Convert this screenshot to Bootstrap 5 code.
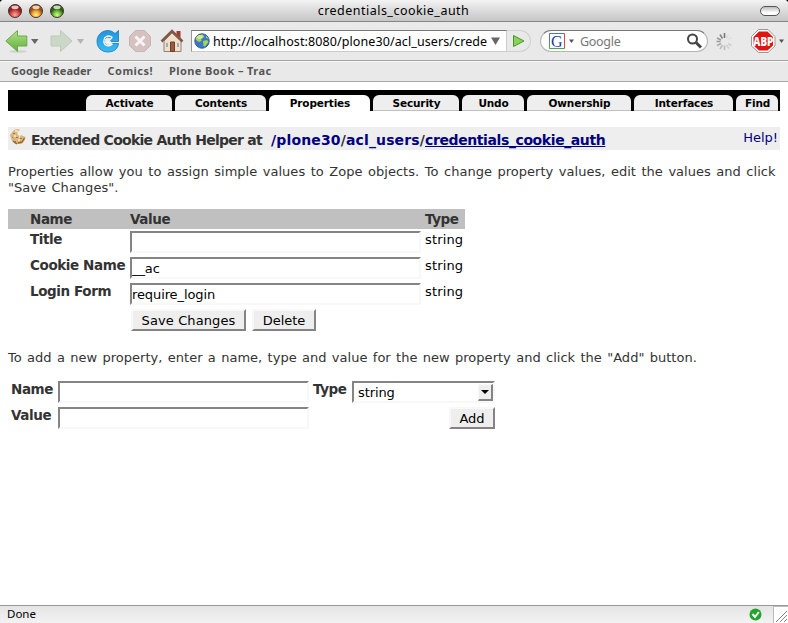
<!DOCTYPE html>
<html lang="en">
<head>
<meta charset="utf-8">
<meta name="viewport" content="width=device-width, initial-scale=1">
<title>credentials_cookie_auth</title>
<link href="https://cdn.jsdelivr.net/npm/bootstrap@5.3.0/dist/css/bootstrap.min.css" rel="stylesheet">
<style>
  html { background: #000; }
  body { height: 623px; overflow: hidden; background: #fff; color: #333; border-radius: 4px 4px 0 0;
    font: 13px/16px "DejaVu Sans", Verdana, sans-serif; }
  svg { display: block; flex: none; }
  .chrome { font-family: "Noto Sans", "Lucida Grande", sans-serif; color: #000; }
  .titlebar { height: 22px; background: linear-gradient(#f4f4f4, #e2e2e2 35%, #c6c6c6); border-bottom: 1px solid #858585; }
  .window-title { font-size: 12.5px; letter-spacing: .48px; padding-right: 1px; }
  .lights { left: 7px; top: 3px; }
  .pill { right: 8px; top: 6px; width: 20px; height: 10px; border: 1.5px solid #555; border-radius: 5px; background: linear-gradient(#bbb, #fff 70%); }
  .toolbar { height: 39px; background: #e9e9e9; border-bottom: 1px solid #a3a3a3; padding-left: 5px; }
  .urlbox { width: 316px; height: 22px; margin-left: 7px; background: #fff; border: 1px solid #999; border-top-color: #777; border-right-color: #ccc; border-bottom-color: #ccc; padding-left: 2px; font-size: 12.5px; }
  .urltext { width: 275px; margin-left: 3px; letter-spacing: .1px; padding-top: 1px; }
  .go { width: 24px; height: 22px; border: 1px solid #d0d0d0; border-left: 0; border-radius: 0 11px 11px 0; padding-left: 5px; }
  .search { width: 168px; height: 22px; margin-left: 9px; background: #fff; border: 1px solid #b5b5b5; border-top-color: #777; border-radius: 11px; padding-left: 8px; font-size: 12.5px; color: #777; }
  .search-hint { margin-left: 1px; letter-spacing: -.3px; padding-top: 1px; }
  .bookmarks { height: 21px; background: #e9e9e9; border-top: 1px solid #f7f7f7; border-bottom: 1px solid #a8a8a8; padding: 0 0 2px 11px; gap: 16px; font-size: 11px; font-weight: 700; color: #555; }
  .bm-reader { letter-spacing: .03px; } .bm-comics { letter-spacing: .45px; } .bm-plone { letter-spacing: .42px; }
  .statusbar { height: 18px; background: linear-gradient(#e4e4e4, #f3f3f3); border-top: 1px solid #999; font-size: 11.5px; padding-left: 7px; }
  .statusbar span { padding-bottom: 1px; }
  .grip { width: 15px; height: 17px; background: #fff; border-left: 1px solid #bbb; border-top: 1px solid #bbb; margin-left: 11px; }

  .page { padding: 8px 8px 0; }
  .tabbar { height: 21px; background: #000; padding: 5px 2px 0 78px; gap: 3px; }
  .tab { height: 16px; background: #eee; border-bottom: 1px solid #c0c0c0; border-radius: 6px 6px 0 0; color: #000; font-size: 10.5px; font-weight: 700; line-height: 16px; letter-spacing: -.15px; padding-left: 1px; text-align: center; text-decoration: none; flex: none; white-space: nowrap; }
  .tab.current { background: #fff; border-color: #fff; }
  .w-activate { width: 86px; } .w-contents { width: 91px; } .w-properties { width: 101px; } .w-security { width: 86px; }
  .w-undo { width: 62px; } .w-ownership { width: 104px; } .w-interfaces { width: 99px; } .w-find { width: 42px; }
  .heading { height: 23px; background: #eee; margin-top: 16px; padding: 2px 2px 0; }
  .heading h1 { font-size: 14px; font-weight: 700; line-height: 22px; margin: 0 0 0 5px; letter-spacing: .14px; white-space: nowrap; }
  .heading h1 span { letter-spacing: -.73px; margin-right: 9px; }
  .heading a.crumb, a.helplink { color: #000080; text-decoration: none; }
  .heading a.here { text-decoration: underline; letter-spacing: -.4px; }
  a.helplink { padding-top: 1px; }
  .intro { margin: 14px 0 0; letter-spacing: .02px; word-spacing: 1.38px; white-space: nowrap; }
  .add-note { margin-top: 19px; word-spacing: 1.17px; }
  .props { display: grid; grid-template-columns: 22px 100px 295px 40px; width: 457px; margin-top: 13px; }
  .props .head { background: #c0c0c0; height: 20px; line-height: 20px; margin-bottom: 2px; }
  .label { font-size: 13.5px; font-weight: 700; letter-spacing: -.4px; white-space: nowrap; }
  .cell { height: 26px; color: #000; }
  .kind { padding-top: 1px; letter-spacing: .15px; }
  .field { width: 291px; height: 22px; border: 2px solid; border-color: #848484 #f8f8f8 #f8f8f8 #848484; background: #fff; color: #000; line-height: 20px; padding: 0; outline: 0; font: inherit; letter-spacing: -.1px; display: block; }
  .narrow { width: 251px; }
  .push { height: 22px; background: #eee; border: 2px solid; border-color: #f8f8f8 #848484 #848484 #f8f8f8; color: #000; font: inherit; line-height: 17px; padding: 0; white-space: nowrap; }
  .w-save { width: 115px; letter-spacing: .1px; } .w-delete { width: 64px; } .w-add { width: 46px; }
  .actions { padding-left: 123px; gap: 6px; }
  .add { display: grid; grid-template-columns: 50px 255px 39px 143px; grid-auto-rows: 26px; width: 487px; margin-top: 15px; }
  .add .lead-in { padding-left: 3px; }
  .picker { width: 143px; padding-left: 4px; }
  .picker-text { padding-top: 1px; }
  .arrow { width: 15px; height: 17px; background: #eee; border: 1px solid; border-color: #f8f8f8 #848484 #848484 #f8f8f8; border-right-width: 2px; border-bottom-width: 2px; }
</style>
</head>
<body class="d-flex flex-column">
<header class="chrome flex-shrink-0">
  <div class="titlebar position-relative d-flex align-items-center justify-content-center">
    <svg class="lights position-absolute" width="60" height="17" viewBox="0 0 60 17">
      <defs>
        <radialGradient id="r" cy=".8"><stop offset="0" stop-color="#ffaaa0"/><stop offset=".6" stop-color="#d94f4a"/><stop offset="1" stop-color="#8e1f20"/></radialGradient>
        <radialGradient id="o" cy=".8"><stop offset="0" stop-color="#fff58a"/><stop offset=".6" stop-color="#eea12d"/><stop offset="1" stop-color="#9a5210"/></radialGradient>
        <radialGradient id="g" cy=".8"><stop offset="0" stop-color="#d8ff90"/><stop offset=".6" stop-color="#68b833"/><stop offset="1" stop-color="#245f12"/></radialGradient>
      </defs>
      <g stroke="#4a3530" stroke-width="1"><circle cx="8" cy="8" r="6.5" fill="url(#r)"/><circle cx="29" cy="8" r="6.5" fill="url(#o)"/><circle cx="50" cy="8" r="6.5" fill="url(#g)"/></g>
      <g fill="#fff" opacity=".75"><ellipse cx="8" cy="4.3" rx="3.6" ry="1.9"/><ellipse cx="29" cy="4.3" rx="3.6" ry="1.9"/><ellipse cx="50" cy="4.3" rx="3.6" ry="1.9"/></g>
    </svg>
    <span class="window-title">credentials_cookie_auth</span>
    <span class="pill position-absolute"></span>
  </div>

  <div class="toolbar d-flex align-items-center">
    <svg width="179" height="28" viewBox="5 27 179 28">
      <defs>
        <linearGradient id="ga" x2="0" y2="1"><stop offset="0" stop-color="#b5e388"/><stop offset="1" stop-color="#5fae3c"/></linearGradient>
        <linearGradient id="bl" x2="0" y2="1"><stop offset="0" stop-color="#2394dd"/><stop offset="1" stop-color="#35bdf4"/></linearGradient>
      </defs>
      <ellipse cx="18" cy="51.5" rx="9" ry="1.3" fill="#d2d2d2"/>
      <path d="M5.8 41 17.500 30.500V36H26.800V46H17.500V51.500Z" fill="url(#ga)" stroke="#68a94c" stroke-linejoin="round"/>
      <path d="M31 39h7.500l-3.700 5z" fill="#666"/>
      <path d="M72 41 60.500 30.500V36H51V46H60.500V51.500Z" fill="#ccd8c7" stroke="#bdc9b8" stroke-linejoin="round"/>
      <path d="M77 39h7l-3.500 5z" fill="#b3b3b3"/>
      <path d="M118.500 30.500V41.500H107.500L111 38Q107 35.500 104.500 39Q103 43 107 45.500Q111 46.500 112.500 43.500H118.500C118 49 113.500 52 108 52C101.500 52 97 47.500 97 41.500C97 35 102 30.500 108 30.500Q112 30.500 115 33.500Z" fill="url(#bl)" stroke="#1678b8" stroke-width=".8"/>
      <path d="M112.500 37.500Q108.500 34.500 105 37.500Q102.500 41.500 105.500 45Q109 47 112.500 44M112 37.500 107.500 42H111" fill="none" stroke="#fff" stroke-width="1.300"/>
      <path d="M135.500 30.500H144.500L150.500 36.500V45.500L144.500 51.500H135.500L129.500 45.500V36.500Z" fill="#d6c1c1" stroke="#c7b4b4"/>
      <path d="m135.500 36.500 9 9m0-9-9 9" stroke="#f8f4f4" stroke-width="3"/>
      <path d="M176.500 31h4v9h-4z" fill="#a43a2c"/>
      <path d="M164 41 172 33 181 41V51.500H164Z" fill="#f1dfcb" stroke="#99806b"/>
      <path d="M161.500 41.500 172 31 182.500 41.500" fill="none" stroke="#7d5a4b" stroke-width="2.600"/>
      <path d="M170.500 42h4v9.500h-4z" fill="#9a5b3d" stroke="#6b4130"/>
      <path d="M166 43h2v4h-2zM177 43h2v4h-2z" fill="#9ab0bd"/>
    </svg>
    <div class="urlbox d-flex align-items-center">
      <svg width="16" height="16" viewBox="0 0 16 16"><circle cx="8" cy="8" r="7.200" fill="#3979cd" stroke="#34558e"/><path d="M2 4Q5 1 9 1.500L10.500 4 7 5.500 7.500 8 5 9 2 7ZM9 8 13 7 14.500 9 11 13.500 9.500 13ZM12 2.500 14.500 5.500 12 5Z" fill="#a5d746"/><ellipse cx="6" cy="4" rx="3" ry="2" fill="#fff" opacity=".45"/></svg>
      <span class="urltext text-nowrap">http://localhost:8080/plone30/acl_users/crede</span>
      <svg class="ms-auto me-1" width="12" height="10" viewBox="0 0 12 10"><path d="M1 1.500h9L5.500 9z" fill="#666"/></svg>
    </div>
    <div class="go d-flex align-items-center"><svg width="13" height="14" viewBox="0 0 13 14"><path d="M1.500 1.500 12 7 1.500 12.500Z" fill="#8bd158" stroke="#45972c"/></svg></div>
    <div class="search d-flex align-items-center">
      <svg width="30" height="16" viewBox="0 0 30 16"><path d="M.5 15.500V.5H15.500" fill="none" stroke="#4a75c5"/><path d="M15.500.5V15.500" stroke="#cc4c40"/><path d="M.5 8V15.500H15.500" fill="none" stroke="#4aa64a"/><text x="2" y="13.500" font-family="Liberation Serif" font-size="16" fill="#173ea5">G</text><path d="M20 6.500h5L22.500 10z" fill="#555"/></svg>
      <span class="search-hint">Google</span>
      <svg class="ms-auto me-1" width="17" height="18" viewBox="0 0 17 18"><circle cx="6.500" cy="7" r="4.500" fill="none" stroke="#444" stroke-width="2"/><path d="m10 10.500 5 5" stroke="#444" stroke-width="3"/></svg>
    </div>
    <svg width="80" height="28" viewBox="708 27 80 28">
      <g stroke-width="1.600"><path d="M724.500 38v-5" stroke="#777"/><path d="m722.500 38.500-2.500-4" stroke="#888"/><path d="m721 40-4-2M720.500 41.500h-4" stroke="#999"/><path d="m721 43.500-4 2" stroke="#aaa"/><path d="m722.500 45-2.500 4M724.500 45.500v4.500" stroke="#bbb"/><path d="m726.500 45 2.500 3.500m-1-5 3.500 2" stroke="#d0d0d0"/><path d="m728 39.500 3.500-2m-5 1 2-4" stroke="#ddd"/></g>
      <path d="M758.500 29.500H768L775 36.500V46L768 52.500H758.500L751.500 46V36.500Z" fill="#fff" stroke="#999"/>
      <path d="M759 31.500H767.500L773 37V45.500L767.500 50.500H759L753.500 45.500V37Z" fill="#e11313"/>
      <text x="763.300" y="45.500" font-family="Open Sans" font-weight="800" font-size="12.500" fill="#fff" text-anchor="middle" textLength="20" lengthAdjust="spacingAndGlyphs">ABP</text>
      <path d="M779 39.500h5L781.500 43z" fill="#555"/>
    </svg>
  </div>
  <nav class="bookmarks d-flex align-items-center"><span class="bm-reader">Google Reader</span><span class="bm-comics">Comics!</span><span class="bm-plone">Plone Book – Trac</span></nav>
</header>

<main class="page flex-grow-1">
  <nav class="tabbar d-flex">
    <a class="tab w-activate">Activate</a><a class="tab w-contents">Contents</a><a class="tab current w-properties">Properties</a><a class="tab w-security">Security</a><a class="tab w-undo">Undo</a><a class="tab w-ownership">Ownership</a><a class="tab w-interfaces">Interfaces</a><a class="tab w-find">Find</a>
  </nav>
  <div class="heading d-flex align-items-start">
    <svg width="16" height="16" viewBox="0 0 16 16"><path d="M4 1Q8-1 10 1 6 3 8 6 10 8 11 6L15.500 8Q15 13 11.500 15H5L1.500 11 0 6Z" fill="#d9b680"/><path d="M8 14 12 13 14.500 9M3 12 7 15" fill="none" stroke="#8f6230" stroke-width="1.300"/><path d="M3 4h2v1H3zM6 8h2v1H6zM10 9h2v1h-2zM2 8h1v1H2zM5 12h1v1H5z" fill="#a67a42"/><path d="M5 2h3M4 7h2M9 8h1M8 11h2" stroke="#ffebba" stroke-width="1.300"/></svg>
    <h1><span>Extended Cookie Auth Helper at</span><a class="crumb">/plone30</a>/<a class="crumb">acl_users</a>/<a class="crumb here">credentials_cookie_auth</a></h1>
    <a class="helplink ms-auto">Help!</a>
  </div>
  <p class="intro">Properties allow you to assign simple values to Zope objects. To change property values, edit the values and click<br>"Save Changes".</p>

  <div class="props">
    <div class="head"></div><div class="head label">Name</div><div class="head label">Value</div><div class="head label">Type</div>
    <div></div><div class="label">Title</div><div class="cell"><input class="field" type="text"></div><div class="cell kind">string</div>
    <div></div><div class="label">Cookie Name</div><div class="cell"><input class="field" type="text" value="__ac"></div><div class="cell kind">string</div>
    <div></div><div class="label">Login Form</div><div class="cell"><input class="field" type="text" value="require_login"></div><div class="cell kind">string</div>
  </div>
  <div class="actions d-flex"><button class="push w-save">Save Changes</button><button class="push w-delete">Delete</button></div>

  <p class="intro add-note">To add a new property, enter a name, type and value for the new property and click the "Add" button.</p>
  <div class="add">
    <div class="label lead-in">Name</div><div><input class="field narrow" type="text"></div><div class="label">Type</div>
    <div class="field picker d-flex align-items-center"><span class="picker-text">string</span><span class="arrow ms-auto d-flex align-items-center justify-content-center"><svg width="8" height="4" viewBox="0 0 8 4"><path d="M0 0h8L4 4z"/></svg></span></div>
    <div class="label lead-in">Value</div><div><input class="field narrow" type="text"></div><div></div><div class="d-flex justify-content-end align-items-start"><button class="push w-add">Add</button></div>
  </div>
</main>

<footer class="statusbar chrome d-flex align-items-center flex-shrink-0">
  <span>Done</span>
  <svg class="ms-auto" width="13" height="13" viewBox="0 0 13 13"><circle cx="6.500" cy="6.500" r="6" fill="#20a52a"/><path d="m3.500 6 2.500 3 3.800-5" fill="none" stroke="#fff" stroke-width="2"/></svg>
  <div class="grip"><svg width="14" height="16" viewBox="0 0 14 16"><path d="M2 15 13 4M6 15l7-7M10 15l3-3" stroke="#888"/></svg></div>
</footer>
<script src="https://cdn.jsdelivr.net/npm/bootstrap@5.3.0/dist/js/bootstrap.bundle.min.js"></script>
</body>
</html>
